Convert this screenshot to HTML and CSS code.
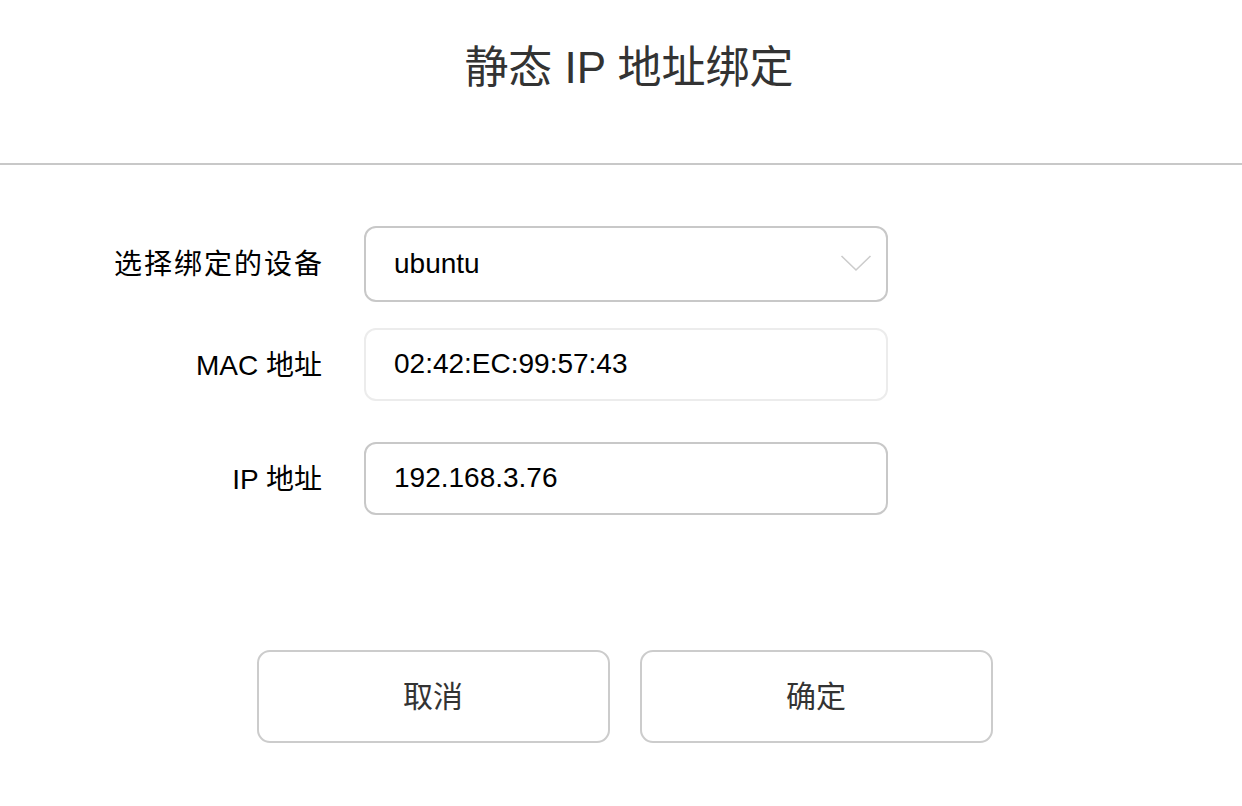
FILE: index.html
```html
<!DOCTYPE html>
<html lang="zh-CN">
<head>
<meta charset="utf-8">
<title>静态 IP 地址绑定</title>
<link rel="stylesheet" href="styles.css">
</head>
<body>
<div class="dialog">
  <header class="header">
    <h1 class="title">静态 IP 地址绑定</h1>
  </header>
  <form class="form">
    <label class="label label-select">选择绑定的设备</label>
    <div class="field field-select">
      <span class="value">ubuntu</span>
      <svg class="chevron" width="32" height="18" viewBox="0 0 32 18"><path d="M1.5 2 L16 16 L30.5 2" fill="none" stroke="#cccccc" stroke-width="1.6"/></svg>
    </div>
    <label class="label label-mac">MAC 地址</label>
    <div class="field field-mac"><span class="value">02:42:EC:99:57:43</span></div>
    <label class="label label-ip">IP 地址</label>
    <div class="field field-ip"><span class="value">192.168.3.76</span></div>
  </form>
  <div class="actions">
    <button class="btn" type="button">取消</button>
    <button class="btn" type="button">确定</button>
  </div>
</div>
</body>
</html>
```
FILE: styles.css
```css
html, body {
  margin: 0;
  padding: 0;
  background: #ffffff;
}
body {
  font-family: "Liberation Sans", "Noto Sans CJK SC", sans-serif;
  color: #000;
}
.dialog {
  width: 1242px;
}
.header {
  height: 163px;
  border-bottom: 2px solid #c8c8c8;
  display: flex;
  align-items: center;
  justify-content: center;
}
.title {
  margin: -35px 0 0 0;
  padding-left: 16px;
  font-size: 44px;
  font-weight: normal;
  color: #333333;
}
.form {
  display: grid;
  grid-template-columns: 322px 524px;
  column-gap: 42px;
  margin-top: 61px;
  align-items: center;
}
.label {
  font-size: 28px;
  text-align: right;
  color: #000;
  padding-bottom: 4px;
}
.label-select {
  letter-spacing: 2px;
  margin-right: -2px;
}
.field {
  box-sizing: border-box;
  border: 2px solid #c8c8c8;
  border-radius: 12px;
  display: flex;
  align-items: center;
  justify-content: space-between;
  padding: 0 14px 0 28px;
  font-size: 28px;
  color: #000;
  background: #fff;
}
.field-select {
  height: 76px;
}
.field-mac {
  height: 73px;
  border-color: #ececec;
  margin-top: 26px;
}
.label-mac {
  margin-top: 26px;
}
.field-ip {
  height: 73px;
  margin-top: 41px;
}
.label-ip {
  margin-top: 41px;
}
.value {
  padding-bottom: 1px;
}
.chevron {
  display: block;
  margin-bottom: 3px;
}
.actions {
  display: flex;
  justify-content: center;
  gap: 30px;
  margin-top: 135px;
  padding-left: 7px;
}
.btn {
  box-sizing: border-box;
  width: 353px;
  height: 93px;
  border: 2px solid #cccccc;
  border-radius: 13px;
  background: #fff;
  font-family: "Liberation Sans", "Noto Sans CJK SC", sans-serif;
  font-size: 30px;
  color: #333333;
  padding: 0 0 5px 0;
}
```
